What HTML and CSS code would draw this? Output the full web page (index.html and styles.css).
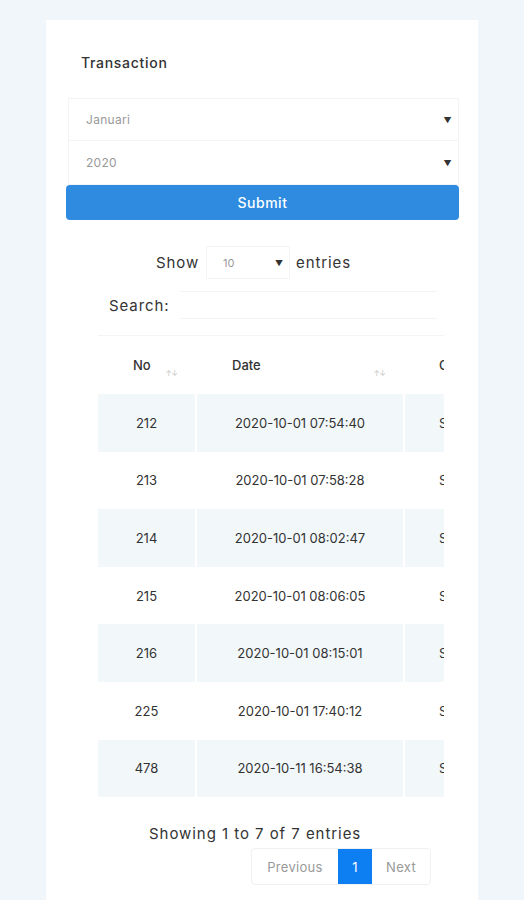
FILE: index.html
```html
<!DOCTYPE html>
<html>
<head>
<meta charset="utf-8">
<link rel="stylesheet" href="styles.css">
</head>
<body>
<div class="card">
  <h2 class="title">Transaction</h2>
  <form class="filter">
    <div class="sel"><span>Januari</span><span class="arrow">▼</span></div>
    <div class="sel"><span>2020</span><span class="arrow">▼</span></div>
    <button type="button" class="submit">Submit</button>
  </form>
  <div class="length">
    <span>Show</span>
    <div class="len-sel"><span>10</span><span class="arrow">▼</span></div>
    <span>entries</span>
  </div>
  <div class="search">
    <span>Search:</span>
    <div class="search-input"></div>
  </div>
  <div class="table-wrap">
    <table class="tbl">
      <thead>
        <tr>
          <th class="c1">No<span class="sort">↑↓</span></th>
          <th class="c2">Date<span class="sort">↑↓</span></th>
          <th class="c3">Customer</th>
        </tr>
      </thead>
      <tbody>
        <tr class="odd"><td>212</td><td>2020-10-01 07:54:40</td><td class="c3">Success</td></tr>
        <tr><td>213</td><td>2020-10-01 07:58:28</td><td class="c3">Success</td></tr>
        <tr class="odd"><td>214</td><td>2020-10-01 08:02:47</td><td class="c3">Success</td></tr>
        <tr><td>215</td><td>2020-10-01 08:06:05</td><td class="c3">Success</td></tr>
        <tr class="odd"><td>216</td><td>2020-10-01 08:15:01</td><td class="c3">Success</td></tr>
        <tr><td>225</td><td>2020-10-01 17:40:12</td><td class="c3">Success</td></tr>
        <tr class="odd"><td>478</td><td>2020-10-11 16:54:38</td><td class="c3">Success</td></tr>
      </tbody>
    </table>
  </div>
  <div class="info">Showing 1 to 7 of 7 entries</div>
  <div class="pager">
    <span class="pg prev">Previous</span>
    <span class="pg cur">1</span>
    <span class="pg next">Next</span>
  </div>
</div>
</body>
</html>
```

FILE: styles.css
```css
html, body {
  margin: 0;
  padding: 0;
}
body {
  background: #f1f6fa;
  font-family: Inter, "Open Sans", "DejaVu Sans", sans-serif;
  color: #222;
  height: 900px;
  overflow: hidden;
}
.card {
  margin: 20px 0 0 46px;
  width: 432px;
  height: 880px;
  background: #fff;
  box-sizing: border-box;
  padding-top: 34px;
}
.title {
  margin: 0 0 0 35px;
  font-size: 14px;
  font-weight: 500;
  line-height: 17px;
  letter-spacing: 0.7px;
  color: #333;
}
.filter {
  margin: 27px 0 0 0;
  padding: 0 19px 0 20px;
  display: flex;
  flex-direction: column;
}
.sel {
  margin-left: 2px;
  height: 43px;
  border: 1px solid #f3f4f6;
  box-sizing: border-box;
  display: flex;
  align-items: center;
  justify-content: space-between;
  padding: 0 6px 0 17px;
  font-size: 12px;
  letter-spacing: 0.3px;
  color: #999;
}
.sel + .sel { border-top: none; height: 44px; }
.arrow {
  font-size: 8px;
  color: #333;
}
.submit {
  height: 35px;
  border: none;
  border-radius: 4px;
  background: #2e8be0;
  color: #fff;
  font-family: inherit;
  font-size: 14px;
  font-weight: 500;
  letter-spacing: 0.5px;
  padding: 0;
}
.length {
  margin-top: 26px;
  display: flex;
  align-items: center;
  font-size: 15px;
  letter-spacing: 0.9px;
  color: #333;
  padding-left: 110px;
  height: 33px;
}
.len-sel {
  margin: 0 6px 0 7px;
  width: 84px;
  height: 33px;
  border: 1px solid #f3f4f6;
  box-sizing: border-box;
  display: flex;
  align-items: center;
  justify-content: space-between;
  padding: 0 6px 0 16px;
  font-size: 11px;
  letter-spacing: 0;
  color: #999;
}
.search {
  margin-top: 12px;
  display: flex;
  align-items: center;
  padding-left: 63px;
  font-size: 15px;
  letter-spacing: 0.9px;
  color: #333;
}
.search-input {
  margin-left: 11px;
  width: 257px;
  height: 26px;
  border-top: 1px solid #f3f4f6;
  border-bottom: 1px solid #f3f4f6;
}
.table-wrap {
  margin: 16px 0 0 52px;
  width: 346px;
  overflow: hidden;
  border-top: 1px solid #f3f4f6;
}
.tbl {
  border-collapse: collapse;
  width: 500px;
  font-size: 13px;
  color: #333;
}
.tbl th {
  height: 58px;
  text-align: left;
  font-weight: 500;
  padding: 0 0 0 35px;
  box-sizing: border-box;
  position: relative;
  border-right: 2px solid #fff;
}
.tbl th.c1 { width: 98px; }
.tbl th.c2 { width: 208px; }
.tbl th.c3 { padding-left: 34px; }
.sort {
  position: absolute;
  right: 18px;
  top: 32px;
  font-size: 8px;
  color: #ccc;
  letter-spacing: -1px;
}
.tbl td {
  height: 57.6px;
  box-sizing: border-box;
  text-align: center;
  border-right: 2px solid #fff;
  padding: 0;
}
.tbl td.c3 { text-align: left; padding-left: 34px; }
.tbl tr.odd td { background: #f2f7fa; }
.info {
  margin-top: 28px;
  padding-left: 103px;
  font-size: 15px;
  letter-spacing: 0.95px;
  color: #333;
  line-height: 18px;
}
.pager {
  margin: 5px 0 0 205px;
  display: inline-flex;
  border: 1px solid #eef0f2;
  border-radius: 4px;
  height: 37px;
  box-sizing: border-box;
  overflow: hidden;
}
.pg {
  display: flex;
  align-items: center;
  font-size: 13px;
  letter-spacing: 0.3px;
  color: #999;
}
.prev { width: 86px; justify-content: center; }
.cur { background: #0d7ff2; color: #fff; width: 34px; justify-content: center; }
.next { width: 58px; justify-content: center; }
```
